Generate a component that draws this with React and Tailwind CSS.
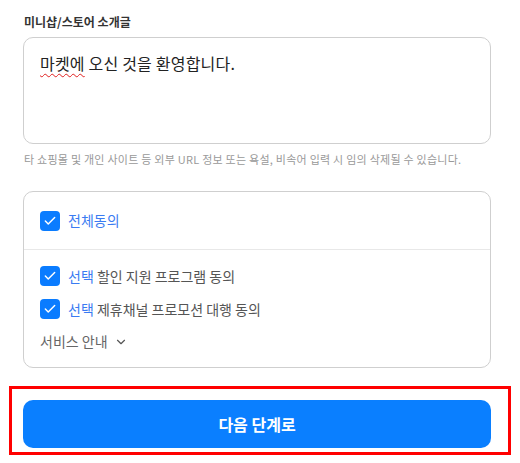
import { ChevronDown, Check } from "lucide-react";

const Box = () => (
  <span className="w-5 h-5 rounded-[4px] bg-[#0a7cff] flex items-center justify-center shrink-0">
    <Check size={14} strokeWidth={2.5} className="text-white" />
  </span>
);

export default function App() {
  return (
    <div
      className="w-[520px] h-[463px] bg-white text-[#222] overflow-hidden"
      style={{ fontFamily: '"Noto Sans CJK KR", "Noto Sans", sans-serif' }}
    >
      <div className="px-[23px] pt-[13px]">
        <div className="text-[12px] font-bold text-[#333] leading-[18px] pl-[1px]">미니샵/스토어 소개글</div>
        <div className="mt-[6px] h-[107px] w-[468px] rounded-[10px] border border-[#cfcfcf] px-4 pt-[13px]">
          <p className="text-[16px] leading-[24px] text-[#222] tracking-[0.2px]">
            <span className="underline decoration-wavy decoration-[#e02020] decoration-1 underline-offset-[3px]">마켓에</span> 오신 것을 환영합니다.
          </p>
        </div>
        <p className="mt-[7px] text-[11px] leading-[16px] text-[#999] pl-[1px] tracking-[0.25px]">
          타 쇼핑몰 및 개인 사이트 등 외부 URL 정보 또는 욕설, 비속어 입력 시 임의 삭제될 수 있습니다.
        </p>

        <div className="mt-[24px] w-[468px] h-[177px] rounded-[10px] border border-[#cfcfcf]">
          <div className="h-[58px] flex items-center gap-2 px-4 border-b border-[#e8e8e8]">
            <Box />
            <span className="text-[14px] text-[#3a7bf2]">전체동의</span>
          </div>
          <div className="px-4 pt-4 flex flex-col">
            <div className="flex items-center gap-2 h-5">
              <Box />
              <span className="text-[14px] text-[#555]">
                <span className="text-[#3a7bf2]">선택</span> 할인 지원 프로그램 동의
              </span>
            </div>
            <div className="flex items-center gap-2 h-5 mt-[13px]">
              <Box />
              <span className="text-[14px] text-[#555]">
                <span className="text-[#3a7bf2]">선택</span> 제휴채널 프로모션 대행 동의
              </span>
            </div>
            <div className="flex items-center gap-[6px] mt-[12px] text-[14px] text-[#666]">
              서비스 안내
              <ChevronDown size={14} strokeWidth={2} className="text-[#555]" />
            </div>
          </div>
        </div>
      </div>

      <div className="mt-[18px] mx-[9px] border-[3px] border-[#ff0000] px-[11px] pt-[11px] pb-[4px] h-[69px]">
        <button className="w-[468px] h-[48px] rounded-[10px] bg-[#0a7fff] text-white text-[16px] font-bold">
          다음 단계로
        </button>
      </div>
    </div>
  );
}
